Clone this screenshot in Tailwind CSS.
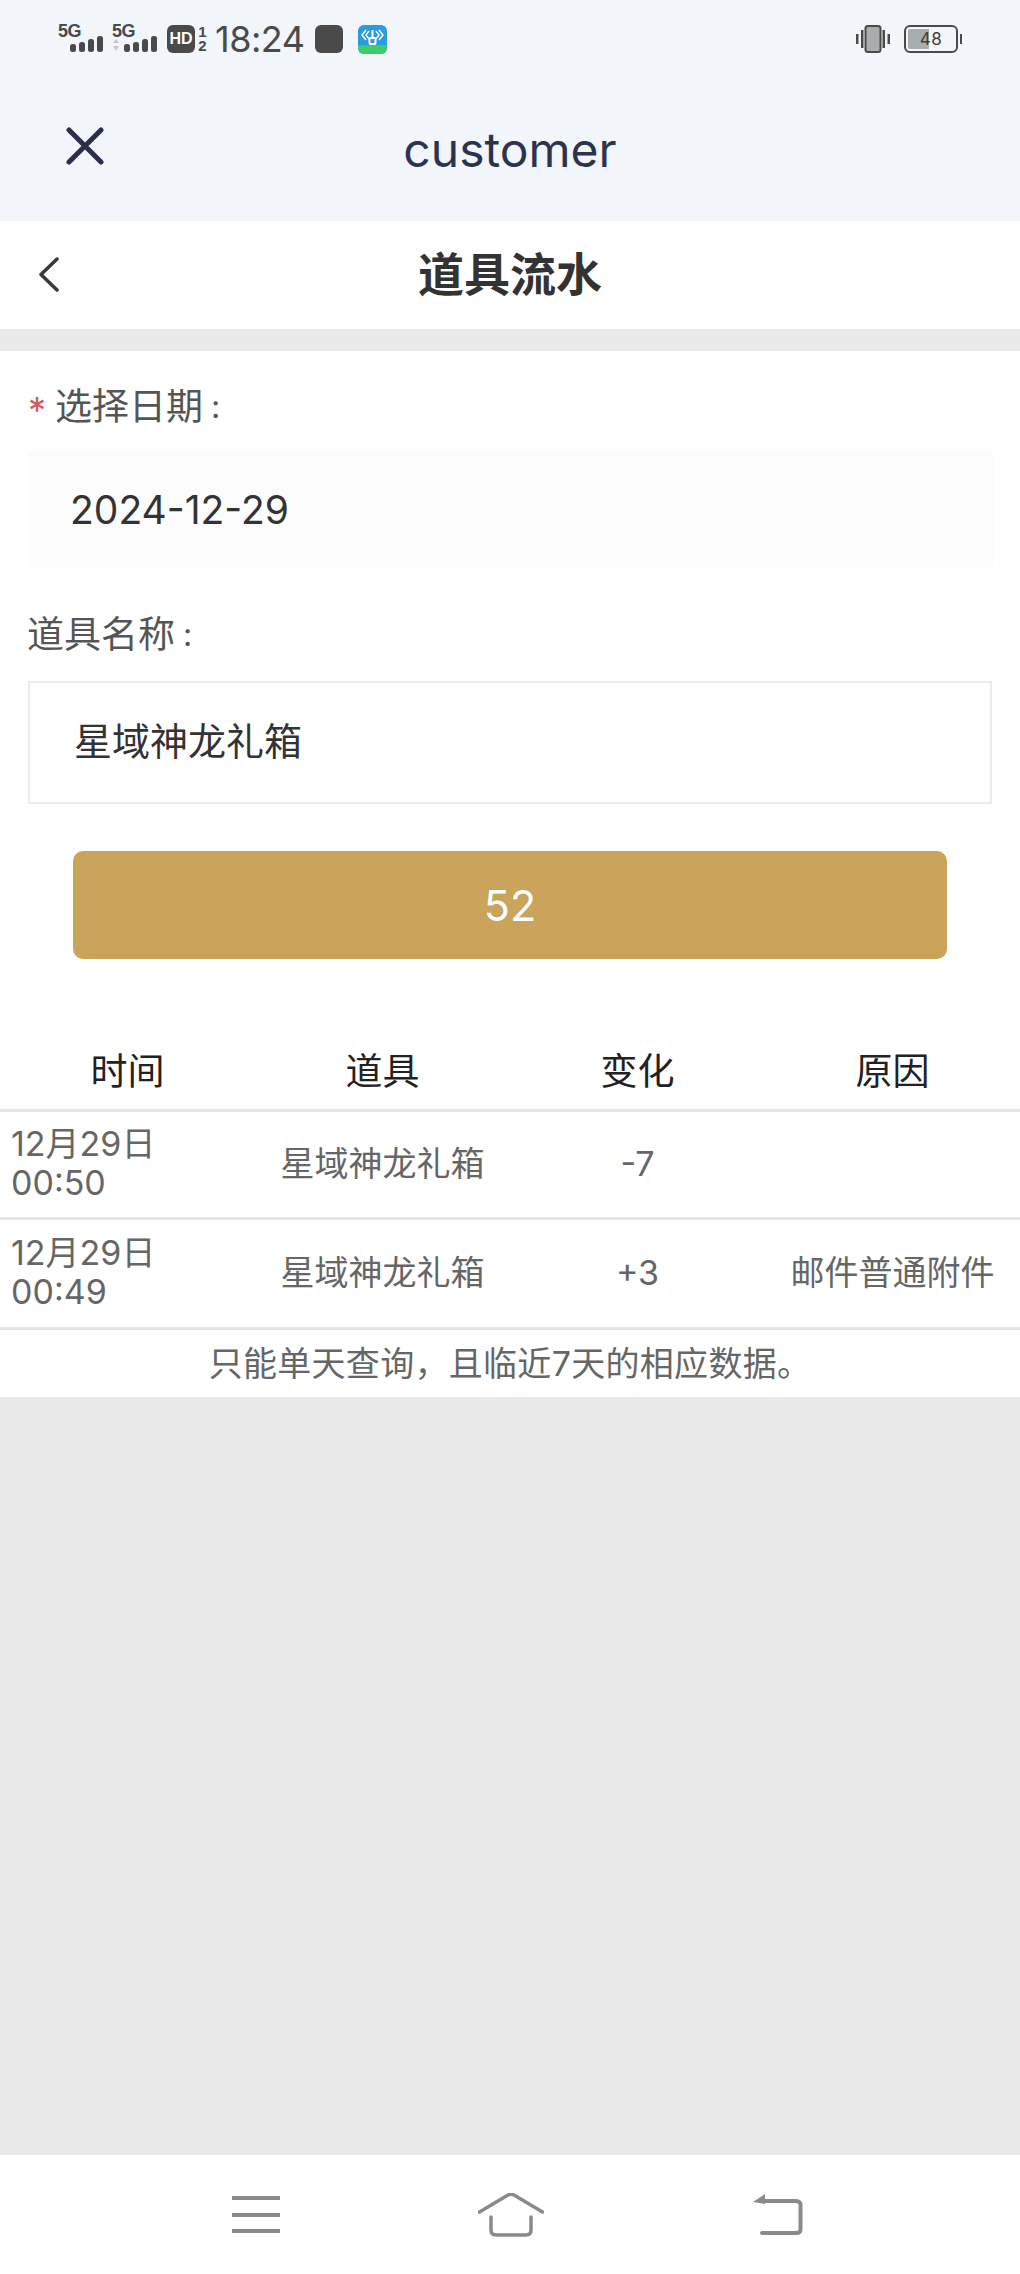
<!DOCTYPE html>
<html lang="zh-CN">
<head>
    <meta charset="UTF-8">
    <meta name="viewport" content="width=device-width, initial-scale=1.0">
    <title>道具流水</title>
    <script src="https://cdn.jsdelivr.net/npm/@tailwindcss/browser@4"></script>
</head>
<body class="w-[1020px] h-[2274px] flex flex-col bg-[#e9e9e9] overflow-hidden font-['Inter','Noto_Sans_CJK_SC',sans-serif]">
    <!-- Status bar + webview title -->
    <div class="bg-[#f2f6fa] h-[221px] shrink-0">
        <div class="h-[78px] pl-[58px] pr-[56px] flex items-center justify-between text-[#4a4a4a]">
            <div class="flex items-center">
                <div class="relative w-[46px] h-[30px]">
                    <span class="absolute left-0 -top-[2px] text-[18px] leading-[18px] font-bold tracking-[-0.5px] font-['Liberation_Sans',sans-serif]">5G</span>
                    <svg class="absolute left-[12px] top-[11px]" width="34" height="18" viewBox="0 0 34 18" fill="#4a4a4a"><rect x="0" y="9" width="6" height="8" rx="2.500"/><rect x="9" y="7" width="6" height="10" rx="2.500"/><rect x="18" y="4" width="6" height="13" rx="2.500"/><rect x="27" y="1" width="6" height="16" rx="2.500"/></svg>
                </div>
                <div class="relative w-[54px] h-[30px] ml-[8px]">
                    <span class="absolute left-0 -top-[2px] text-[18px] leading-[18px] font-bold tracking-[-0.5px] font-['Liberation_Sans',sans-serif]">5G</span>
                    <svg class="absolute left-0 top-[11px]" width="46" height="18" viewBox="0 0 46 18" fill="#4a4a4a"><path d="M1 8 4 4 7 8Z M1 11 4 16 7 11Z" fill="#c4c8cc"/><rect x="12" y="9" width="6" height="8" rx="2.500"/><rect x="21" y="7" width="6" height="10" rx="2.500"/><rect x="30" y="4" width="6" height="13" rx="2.500"/><rect x="39" y="1" width="6" height="16" rx="2.500"/></svg>
                </div>
                <div class="w-[28px] h-[28px] ml-[1px] rounded-[6px] bg-[#4a4a4a] text-white text-[16px] leading-[28px] font-bold text-center font-['Liberation_Sans',sans-serif]">HD</div>
                <div class="w-[11px] ml-[2px] flex flex-col items-center text-[15px] leading-[14px] font-bold font-['Liberation_Sans',sans-serif]">
                    <span>1</span>
                    <span>2</span>
                </div>
                <span class="ml-[7px] text-[36px] leading-[40px] tracking-[-0.5px]">18:24</span>
                <div class="ml-[11px] w-[28px] h-[28px] rounded-[6px] bg-[#4a4a4a]"></div>
                <svg class="ml-[15px]" width="29" height="29" viewBox="0 0 29 29">
                    <rect width="29" height="29" rx="6" fill="#2a9be0"/>
                    <path d="M0 20h29v3a6 6 0 0 1-6 6H6a6 6 0 0 1-6-6Z" fill="#3ecb6c"/>
                    <path d="M8 5 4 10l4 5M21 5l4 5-4 5M11 6l-3 4 3 4M18 6l3 4-3 4" fill="none" stroke="#fff" stroke-width="1.400"/>
                    <path d="M14.500 5v9" stroke="#fff" stroke-width="2"/>
                    <rect x="11.500" y="13" width="6" height="6" rx="1" fill="none" stroke="#fff" stroke-width="2"/>
                </svg>
            </div>
            <div class="flex items-center mr-[6px]">
                <svg width="36" height="28" viewBox="0 0 36 28" fill="none">
                    <rect x="1" y="9" width="2.500" height="10" fill="#4a4a4a"/>
                    <rect x="6" y="5" width="2.500" height="18" fill="#4a4a4a"/>
                    <rect x="27.500" y="5" width="2.500" height="18" fill="#4a4a4a"/>
                    <rect x="32.500" y="9" width="2.500" height="10" fill="#4a4a4a"/>
                    <rect x="10.500" y="1" width="15" height="26" rx="2.500" fill="#a9adad" stroke="#4a4a4a" stroke-width="2"/>
                </svg>
                <div class="relative ml-[13px] w-[54px] h-[28px] rounded-[6px] border-2 border-[#4a4a4a] p-[2px]">
                    <div class="w-[21px] h-full bg-[#a9adad] rounded-l-[2px]"></div>
                    <span class="absolute inset-0 text-center text-[17px] leading-[24px] tracking-[0.5px] text-[#3f3f3f]">48</span>
                    <div class="absolute -right-[6px] top-[7px] w-[2px] h-[10px] bg-[#4a4a4a]"></div>
                </div>
            </div>
        </div>
        <div class="relative h-[143px] flex items-center justify-center">
            <svg class="absolute left-[66px] top-[49px]" width="38" height="38" viewBox="0 0 38 38" fill="none" stroke="#2b2f4d" stroke-width="5" stroke-linecap="round">
                <path d="M3 3 35 35M35 3 3 35"/>
            </svg>
            <span class="text-[48px] leading-[56px] text-[#2d3250]">customer</span>
        </div>
    </div>

    <!-- Page header -->
    <div class="relative h-[108px] shrink-0 bg-white flex items-center justify-center">
        <svg class="absolute left-[39px] top-[36px]" width="20" height="35" viewBox="0 0 20 35" fill="none" stroke="#3a3a3a" stroke-width="3.500" stroke-linecap="round" stroke-linejoin="round">
            <path d="M18 2 2 17.500 18 33"/>
        </svg>
        <h1 class="text-[46px] leading-[58px] pb-[2px] font-bold text-[#333]">道具流水</h1>
    </div>

    <!-- Form -->
    <div class="mt-[22px] bg-white shrink-0 pt-[34px]">
        <div class="px-[28px] flex items-center h-[44px] text-[37px] text-[#555]">
            <span class="w-[27px] text-[#e0565f] text-[36px] leading-[36px] pt-[6px]">*</span>
            <span>选择日期</span>
            <span class="ml-[8px] text-[32px]">:</span>
        </div>
        <div class="mx-[28px] mt-[22px] w-[965px] h-[116px] bg-[#fcfcfc] pl-[42px] flex items-center pt-[2px] text-[39px] text-[#333]">2024-12-29</div>
        <div class="px-[27px] mt-[46px] flex items-center h-[44px] text-[37px] text-[#555]">
            <span>道具名称</span>
            <span class="ml-[8px] text-[32px]">:</span>
        </div>
        <div class="mx-[28px] mt-[24px] w-[964px] h-[123px] border-2 border-[#ececec] pl-[44px] pb-[2px] flex items-center text-[38px] text-[#333]">星域神龙礼箱</div>
        <button class="block mx-auto mt-[47px] w-[874px] h-[108px] rounded-[10px] bg-[#caa45b] text-white text-[43px]">52</button>

        <!-- Table -->
        <table class="mt-[72px] w-full table-fixed border-collapse text-center">
            <thead>
                <tr class="h-[79px] border-b-[3px] border-[#e6e6e6] text-[37px] text-[#222]">
                    <th class="font-normal pt-[3px]">时间</th>
                    <th class="font-normal pt-[3px]">道具</th>
                    <th class="font-normal pt-[3px]">变化</th>
                    <th class="font-normal pt-[3px]">原因</th>
                </tr>
            </thead>
            <tbody class="text-[34px] text-[#666]">
                <tr class="h-[108px] border-b-[3px] border-[#e6e6e6]">
                    <td class="text-left pl-[11px] text-[34px] leading-[39px] pb-[2px]">12月29日<br>00:50</td>
                    <td class="pb-[2px]">星域神龙礼箱</td>
                    <td class="pb-[2px]">-7</td>
                    <td></td>
                </tr>
                <tr class="h-[110px] border-b-[3px] border-[#e6e6e6]">
                    <td class="text-left pl-[11px] text-[34px] leading-[39px] pb-[2px]">12月29日<br>00:49</td>
                    <td class="pb-[2px]">星域神龙礼箱</td>
                    <td class="pb-[2px]">+3</td>
                    <td class="pb-[2px]">邮件普通附件</td>
                </tr>
            </tbody>
        </table>
        <p class="h-[67px] flex items-center justify-center tracking-[0.3px] text-[34px] text-[#666]">只能单天查询，且临近7天的相应数据。</p>
    </div>

    <div class="flex-1"></div>

    <!-- Navigation bar -->
    <div class="h-[119px] shrink-0 bg-white flex items-center pl-[232px]">
        <svg width="48" height="40" viewBox="0 0 48 40" fill="none" stroke="#8a8a8a" stroke-width="4">
            <path d="M0 3h48M0 20h48M0 36h48"/>
        </svg>
        <svg class="ml-[198px]" width="66" height="44" viewBox="0 0 66 44" fill="none" stroke="#8a8a8a" stroke-width="3.500" stroke-linecap="round" stroke-linejoin="round">
            <path d="M1.500 19 30 2q3-1.500 6 0L64.500 19"/>
            <path d="M13 24v13q0 5 5 5h30q5 0 5-5V24"/>
        </svg>
        <svg class="ml-[209px]" width="50" height="44" viewBox="0 0 50 44" fill="none">
            <path d="M12 8h31q4.500 0 4.500 4.500V36q0 4-4 4H9" stroke="#8a8a8a" stroke-width="4" stroke-linecap="round"/>
            <path d="M0 9 12 1v10Z" fill="#8a8a8a"/>
        </svg>
    </div>
</body>
</html>
